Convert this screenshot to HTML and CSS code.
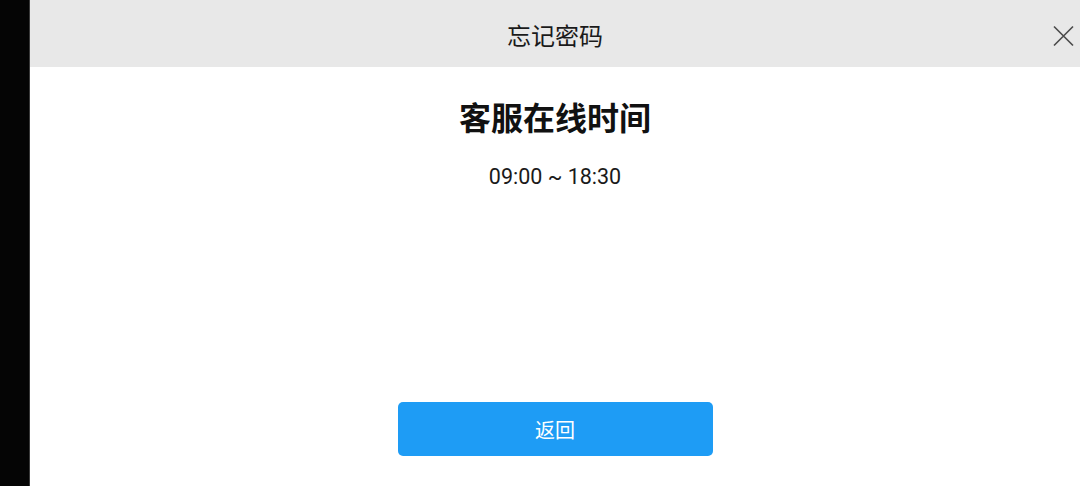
FILE: index.html
```html
<!DOCTYPE html>
<html lang="zh-CN">
<head>
<meta charset="utf-8">
<title>忘记密码</title>
<link rel="stylesheet" href="styles.css">
</head>
<body>
<div class="screen">
  <div class="side"></div>
  <div class="main">
    <header class="header">
      <span class="spacer"></span>
      <h1 class="title">忘记密码</h1>
      <button class="close" aria-label="关闭">
        <svg width="22" height="22" viewBox="0 0 22 22"><path d="M2 1.5 L21 20.5 M21 1.5 L2 20.5" stroke="#4a4a4a" stroke-width="1.6" fill="none"/></svg>
      </button>
    </header>
    <section class="content">
      <h2 class="heading">客服在线时间</h2>
      <p class="time">09:00 ~ 18:30</p>
      <button class="back">返回</button>
    </section>
  </div>
</div>
</body>
</html>
```
FILE: styles.css
```css
html, body {
  margin: 0;
  padding: 0;
  background: #000;
}
body {
  font-family: Roboto, "Noto Sans CJK SC", sans-serif;
}
.screen {
  display: flex;
  width: 1080px;
  height: 486px;
  overflow: hidden;
}
.side {
  width: 29px;
  background: #050505;
  border-right: 1px solid #3a3a3a;
}
.main {
  flex: 1;
  display: flex;
  flex-direction: column;
  background: #fff;
}
.header {
  height: 67px;
  background: #e8e8e8;
  display: grid;
  grid-template-columns: 1fr auto 1fr;
  align-items: center;
}
.title {
  margin: 0;
  font-family: "Noto Sans CJK SC", sans-serif;
  font-weight: 400;
  font-size: 24px;
  color: #1a1a1a;
  line-height: 30px;
  padding-top: 2px;
}
.close {
  justify-self: end;
  margin-right: 6px;
  padding: 0;
  border: 0;
  background: none;
  width: 22px;
  height: 22px;
  display: flex;
  margin-top: 4px;
}
.content {
  flex: 1;
  display: flex;
  flex-direction: column;
  align-items: center;
  padding: 29px 0 30px;
}
.heading {
  margin: 0;
  font-family: "Noto Sans CJK SC", sans-serif;
  font-weight: 700;
  font-size: 32px;
  line-height: 40px;
  color: #111;
}
.time {
  margin: 29px 0 0;
  font-family: Roboto, "Noto Sans CJK SC", sans-serif;
  font-size: 21.5px;
  line-height: 24px;
  color: #1a1a1a;
}
.back {
  margin-top: auto;
  width: 315px;
  height: 54px;
  border: 0;
  border-radius: 5px;
  background: #1e9cf5;
  color: #fff;
  font-family: "Noto Sans CJK SC", sans-serif;
  font-size: 20px;
  padding: 0;
}
```
